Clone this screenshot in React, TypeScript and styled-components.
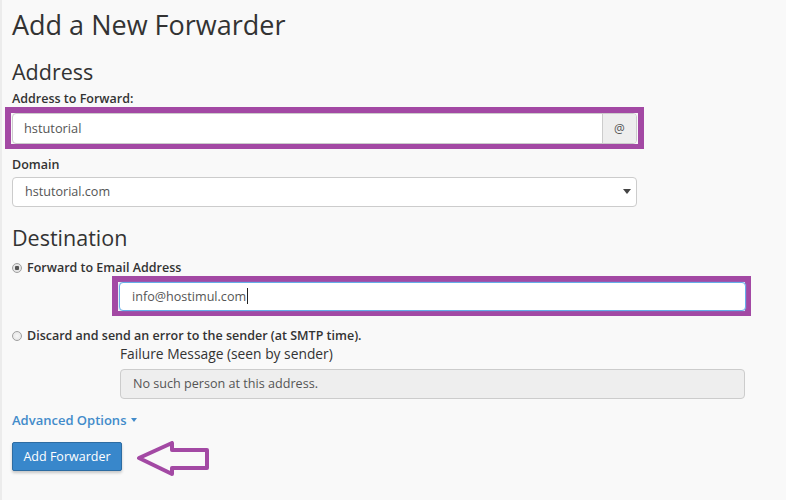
import React from "react";
import styled, { createGlobalStyle } from "styled-components";

const GlobalStyle = createGlobalStyle`
  html, body {
    margin: 0;
    background: #f9f9f9;
  }
  body {
    font-family: "Open Sans", "DejaVu Sans", sans-serif;
    color: #333;
  }
`;

const PURPLE = "#a349a4";

const Page = styled.div`
  border-left: 2px solid #ececec;
  padding: 5px 0 20px 10px;
  min-height: 475px;
`;

const Title = styled.h1`
  margin: 0;
  font-size: 27px;
  font-weight: 400;
  line-height: 40px;
  color: #333;
`;

const SectionTitle = styled.h2<{ $top: number }>`
  margin: ${(p) => p.$top}px 0 0;
  font-size: 21.5px;
  font-weight: 400;
  line-height: 30px;
  color: #333;
`;

const FieldLabel = styled.div<{ $top: number }>`
  margin: ${(p) => p.$top}px 0 -2px;
  font-size: 12.5px;
  font-weight: 600;
  line-height: 20px;
  color: #333;
`;

const Highlight = styled.div<{ $left: number; $width: number }>`
  margin-left: ${(p) => p.$left}px;
  width: ${(p) => p.$width}px;
  border: 6px solid ${PURPLE};
  border-bottom-width: 5px;
  padding: 0 1px;
  box-sizing: border-box;
`;

const InputGroup = styled.div`
  display: flex;
  height: 31px;
  box-sizing: border-box;
  border: 1px solid #ccc;
  border-radius: 4px;
  background: #fff;
  overflow: hidden;
`;

const InputText = styled.div`
  flex: 1;
  display: flex;
  align-items: center;
  padding: 0 11px 1px;
  font-size: 12.8px;
  color: #555;
`;

const Addon = styled.div`
  width: 33px;
  display: flex;
  align-items: center;
  justify-content: center;
  background: #eee;
  border-left: 1px solid #ccc;
  font-size: 12px;
  color: #555;
`;

const Field = styled.div<{ $width: number; $focus?: boolean; $disabled?: boolean }>`
  width: ${(p) => p.$width}px;
  height: 30px;
  box-sizing: border-box;
  display: flex;
  align-items: center;
  padding: 0 12px 1px;
  border: 1px solid ${(p) => (p.$focus ? "#66afe9" : "#ccc")};
  border-radius: 4px;
  background: ${(p) => (p.$disabled ? "#eee" : "#fff")};
  box-shadow: ${(p) => (p.$focus ? "0 0 2px rgba(102, 175, 233, 0.6)" : "none")};
  font-size: 12.6px;
  color: #555;
`;

const Select = styled(Field)`
  justify-content: space-between;
  margin-top: 4px;
  padding-right: 5px;
`;

const Caret = styled.span<{ $size: number; $color: string }>`
  width: 0;
  height: 0;
  border-left: ${(p) => p.$size}px solid transparent;
  border-right: ${(p) => p.$size}px solid transparent;
  border-top: ${(p) => p.$size + 1}px solid ${(p) => p.$color};
`;

const TextCursor = styled.span`
  display: inline-block;
  width: 1px;
  height: 16px;
  background: #222;
  margin-left: 1px;
`;

const RadioRow = styled.label<{ $top: number }>`
  display: flex;
  align-items: center;
  gap: 5px;
  margin: ${(p) => p.$top}px 0 -2px;
  font-size: 12.5px;
  font-weight: 600;
  line-height: 20px;
  color: #333;
`;

const Radio = styled.span<{ $checked?: boolean }>`
  width: 8px;
  height: 8px;
  border-radius: 50%;
  border: 1px solid #a0a0a0;
  background: radial-gradient(circle, ${(p) => (p.$checked ? "#555 0 2px, #e6e6e6 2.5px" : "#f6f6f6 0, #e2e2e2 100%")});
`;

const Indented = styled.div<{ $top: number }>`
  margin-left: 108px;
  margin-top: ${(p) => p.$top}px;
`;

const SubLabel = styled.div`
  font-size: 13.8px;
  font-weight: 400;
  line-height: 18px;
  color: #333;
  margin-bottom: 6px;
`;

const Toggle = styled.div`
  display: flex;
  align-items: center;
  gap: 5px;
  margin-top: 12px;
  font-size: 13px;
  font-weight: 600;
  line-height: 18px;
  color: #428bca;
`;

const ActionRow = styled.div`
  display: flex;
  align-items: flex-start;
  gap: 15px;
  margin-top: 13px;
`;

const PrimaryButton = styled.button`
  width: 110px;
  height: 29px;
  padding: 0;
  border: 1px solid #2d6ca2;
  border-radius: 2px;
  background: #3887cb;
  box-shadow: 0 2px 3px rgba(0, 0, 0, 0.2);
  color: #fff;
  font-family: "Open Sans", "DejaVu Sans", sans-serif;
  font-size: 12.5px;
`;

const Pointer = () => (
  <svg width="74" height="36" viewBox="0 0 74 36" style={{ marginTop: -1 }}>
    <polygon
      points="2,17 35,2 35,9 70,9 70,27 35,27 35,33"
      fill="none"
      stroke={PURPLE}
      strokeWidth="4"
      strokeLinejoin="round"
    />
  </svg>
);

export default function App() {
  return (
    <>
      <GlobalStyle />
      <Page>
        <Title>Add a New Forwarder</Title>

        <SectionTitle $top={12}>Address</SectionTitle>
        <FieldLabel $top={2}>Address to Forward:</FieldLabel>
        <Highlight $left={-7} $width={639}>
          <InputGroup>
            <InputText>hstutorial</InputText>
            <Addon>@</Addon>
          </InputGroup>
        </Highlight>

        <FieldLabel $top={6}>Domain</FieldLabel>
        <Select $width={625}>
          <span>hstutorial.com</span>
          <Caret $size={4} $color="#444" />
        </Select>

        <SectionTitle $top={16}>Destination</SectionTitle>
        <RadioRow $top={5}>
          <Radio $checked />
          Forward to Email Address
        </RadioRow>
        <Highlight $left={100} $width={639}>
          <Field $width={627} $focus style={{ height: 29 }}>
            info@hostimul.com
            <TextCursor />
          </Field>
        </Highlight>

        <RadioRow $top={10}>
          <Radio />
          Discard and send an error to the sender (at SMTP time).
        </RadioRow>
        <Indented $top={1}>
          <SubLabel>Failure Message (seen by sender)</SubLabel>
          <Field $width={625} $disabled>
            No such person at this address.
          </Field>
        </Indented>

        <Toggle>
          Advanced Options
          <Caret $size={3} $color="#428bca" />
        </Toggle>

        <ActionRow>
          <PrimaryButton>Add Forwarder</PrimaryButton>
          <Pointer />
        </ActionRow>
      </Page>
    </>
  );
}
